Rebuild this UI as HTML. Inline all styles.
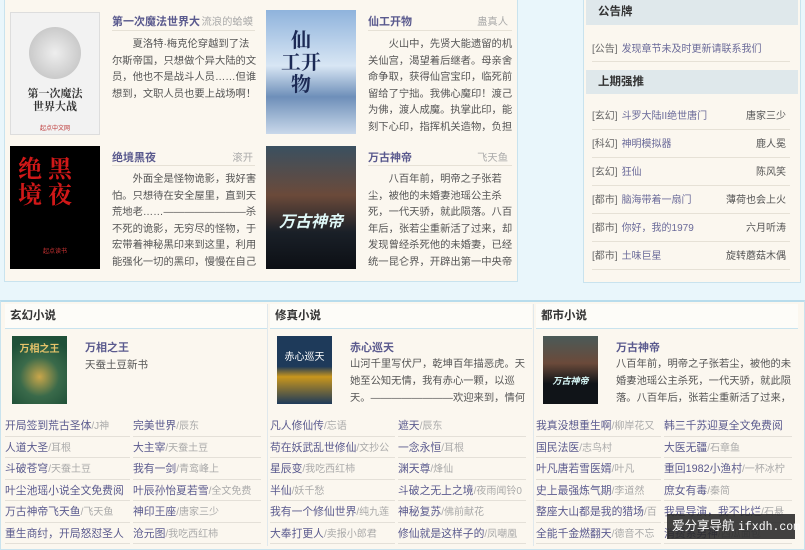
<!DOCTYPE html>
<html><head><meta charset="utf-8"><style>
*{margin:0;padding:0;box-sizing:border-box}
body{width:805px;height:546px;overflow:hidden;background:#e9f6fb;font-family:"Liberation Sans","Noto Sans CJK SC",sans-serif;font-size:11px;color:#555;position:relative}
.a{position:absolute}
.panel{background:#fbf7ef;border:1px solid #c9e3ee}
.t{color:#5a5a8e;font-weight:bold;font-size:11px;white-space:nowrap}
.au{color:#aaa;font-size:10.3px;white-space:nowrap;text-align:right}
.desc{font-size:10.3px;line-height:16.6px;color:#555;text-indent:2em;overflow:hidden}
.hd{background:#dfe8eb;font-weight:bold;font-size:11.5px;color:#333;padding-left:12px;line-height:26px}
.row{border-bottom:1px solid #e6e1d6;font-size:10px;height:28px;line-height:30px;white-space:nowrap;position:relative}
.row .k{color:#666}.row .n{color:#6a6a99;margin-left:4px}
.row .r{position:absolute;right:4px;top:0;color:#555}
.ch{font-weight:bold;font-size:11.5px;color:#333;border-bottom:1px solid #c9e3ee;background:#fdfcf8;line-height:24px;padding-left:5px}
.li{height:21.5px;line-height:22px;border-bottom:1px solid #e4e0d8;font-size:10.8px;white-space:nowrap;overflow:hidden;color:#5a5a8e}
.li i{font-style:normal;color:#aaa;font-size:10px}
.cover{overflow:hidden;text-align:center}
</style></head><body>

<div class="a panel" style="left:4px;top:-2px;width:514px;height:284px"></div>

<div class="a cover" style="left:10px;top:12px;width:90px;height:123px;background:#f2f2f2;border:1px solid #ddd">
 <div style="margin:14px auto 0;width:52px;height:52px;border-radius:50%;background:radial-gradient(circle,#eee,#bbb)"></div>
 <div style="font-family:'Noto Serif CJK SC',serif;font-weight:bold;font-size:11px;color:#333;line-height:13px;margin-top:8px">第一次魔法<br>世界大战</div>
 <div style="font-size:6px;color:#b33;margin-top:10px">起点中文网</div>
</div>
<div class="a t" style="left:112px;top:13px">第一次魔法世界大</div>
<div class="a au" style="left:193px;top:13px;width:60px">流浪的蛤蟆</div>
<div class="a" style="left:112px;top:30px;width:143px;border-top:1px solid #e6e1d6"></div>
<div class="a desc" style="left:112px;top:37px;width:145px;height:70px">夏洛特·梅克伦穿越到了法尔斯帝国，只想做个异大陆的文员，他也不是战斗人员……但谁想到，文职人员也要上战场啊！</div>

<div class="a cover" style="left:266px;top:10px;width:90px;height:124px;background:linear-gradient(180deg,#8fb3dc,#d8e6f4 45%,#6e8fb9 70%,#c9d8ea);">
 <div style="font-family:'Noto Serif CJK SC',serif;font-size:20px;color:#1c2a55;font-weight:bold;line-height:22px;margin-top:18px;margin-left:-20px">仙<br>工开<br>物</div>
</div>
<div class="a t" style="left:368px;top:13px">仙工开物</div>
<div class="a au" style="left:448px;top:13px;width:60px">蛊真人</div>
<div class="a" style="left:368px;top:30px;width:144px;border-top:1px solid #e6e1d6"></div>
<div class="a desc" style="left:368px;top:37px;width:146px;height:98px">火山中，先贤大能遗留的机关仙宫，渴望着后继者。母亲舍命争取，获得仙宫宝印，临死前留给了宁拙。我佛心魔印！渡己为佛，渡人成魔。执掌此印，能刻下心印，指挥机关造物，负担极低。常人指</div>

<div class="a cover" style="left:10px;top:146px;width:90px;height:123px;background:#000">
 <div style="font-family:'Noto Serif CJK SC',serif;font-size:24px;color:#d01818;font-weight:bold;line-height:26px;margin-top:8px;text-align:left;padding-left:8px">绝 黑<br>境 夜</div>
 <div style="font-size:6px;color:#c33;margin-top:40px">起点读书</div>
</div>
<div class="a t" style="left:112px;top:149px">绝境黑夜</div>
<div class="a au" style="left:193px;top:149px;width:60px">滚开</div>
<div class="a" style="left:112px;top:165px;width:143px;border-top:1px solid #e6e1d6"></div>
<div class="a desc" style="left:112px;top:172px;width:145px;height:100px">外面全是怪物诡影，我好害怕。只想待在安全屋里，直到天荒地老……————————杀不死的诡影，无穷尽的怪物，于宏带着神秘黑印来到这里，利用能强化一切的黑印，慢慢在自己的安全屋</div>

<div class="a cover" style="left:266px;top:146px;width:90px;height:123px;background:linear-gradient(180deg,#3a5060,#6b4a3a 40%,#1a2028 70%,#0c0f14)">
 <div style="font-size:16px;font-weight:bold;color:#dff8f8;margin-top:62px;font-style:italic">万古神帝</div>
</div>
<div class="a t" style="left:368px;top:149px">万古神帝</div>
<div class="a au" style="left:448px;top:149px;width:60px">飞天鱼</div>
<div class="a" style="left:368px;top:165px;width:144px;border-top:1px solid #e6e1d6"></div>
<div class="a desc" style="left:368px;top:172px;width:146px;height:100px">八百年前，明帝之子张若尘，被他的未婚妻池瑶公主杀死，一代天骄，就此陨落。八百年后，张若尘重新活了过来，却发现曾经杀死他的未婚妻，已经统一昆仑界，开辟出第一中央帝国，号称“池瑶女</div>

<div class="a panel" style="left:583px;top:-2px;width:218px;height:285px">
 <div class="hd" style="margin:0 2px">公告牌</div>
 <div style="padding:0 10px 0 8px">
  <div class="row" style="margin-top:10px;height:27px"><span class="k">[公告]</span><span class="n">发现章节未及时更新请联系我们</span></div>
 </div>
 <div class="hd" style="margin:8px 2px 0;line-height:24px">上期强推</div>
 <div style="padding:8px 10px 0 8px">
  <div class="row"><span class="k">[玄幻]</span><span class="n">斗罗大陆II绝世唐门</span><span class="r">唐家三少</span></div>
  <div class="row"><span class="k">[科幻]</span><span class="n">神明模拟器</span><span class="r">鹿人冕</span></div>
  <div class="row"><span class="k">[玄幻]</span><span class="n">狂仙</span><span class="r">陈风笑</span></div>
  <div class="row"><span class="k">[都市]</span><span class="n">脑海带着一扇门</span><span class="r">薄荷也会上火</span></div>
  <div class="row"><span class="k">[都市]</span><span class="n">你好，我的1979</span><span class="r">六月听涛</span></div>
  <div class="row"><span class="k">[都市]</span><span class="n">土味巨星</span><span class="r">旋转蘑菇木偶</span></div>
 </div>
</div>

<div class="a panel" style="left:0;top:300px;width:805px;height:250px;border-top:2px solid #b8dcec"></div>

<div class="a" style="left:5px;top:304px;width:262px"><div class="ch">玄幻小说</div></div>
<div class="a cover" style="left:12px;top:336px;width:55px;height:68px;background:radial-gradient(circle at 50% 60%,#c9a64a 0,#3a6a4a 40%,#1f5038 80%)"><div style="color:#e6c36a;font-size:10px;font-weight:bold;margin-top:4px">万相之王</div></div>
<div class="a t" style="left:85px;top:339px">万相之王</div>
<div class="a" style="left:85px;top:357px;font-size:10.5px;color:#555">天蚕土豆新书</div>
<div class="a" style="left:5px;top:415px;width:125px">
 <div class="li">开局签到荒古圣体<i>/J神</i></div><div class="li">人道大圣<i>/耳根</i></div><div class="li">斗破苍穹<i>/天蚕土豆</i></div><div class="li">叶尘池瑶小说全文免费阅</div><div class="li">万古神帝飞天鱼<i>/飞天鱼</i></div><div class="li">重生商纣，开局怒怼圣人</div>
</div>
<div class="a" style="left:133px;top:415px;width:128px">
 <div class="li">完美世界<i>/辰东</i></div><div class="li">大主宰<i>/天蚕土豆</i></div><div class="li">我有一剑<i>/青鸾峰上</i></div><div class="li">叶辰孙怡夏若雪<i>/全文免费</i></div><div class="li">神印王座<i>/唐家三少</i></div><div class="li">沧元图<i>/我吃西红柿</i></div>
</div>

<div class="a" style="left:267px;top:304px;height:242px;border-left:1px solid #e0e8ec"></div>
<div class="a" style="left:270px;top:304px;width:262px"><div class="ch">修真小说</div></div>
<div class="a cover" style="left:277px;top:336px;width:55px;height:68px;background:linear-gradient(180deg,#1e3a5a 45%,#c9961c 60%,#1e3a5a)"><div style="color:#fff;font-size:10px;margin-top:12px">赤心巡天</div></div>
<div class="a t" style="left:350px;top:339px">赤心巡天</div>
<div class="a" style="left:350px;top:356px;width:180px;font-size:10.3px;line-height:17px;color:#555;height:51px;overflow:hidden">山河千里写伏尸，乾坤百年描恶虎。天她至公知无情，我有赤心一颗，以巡天。————————欢迎来到，情何以甚</div>
<div class="a" style="left:270px;top:415px;width:125px">
 <div class="li">凡人修仙传<i>/忘语</i></div><div class="li">苟在妖武乱世修仙<i>/文抄公</i></div><div class="li">星辰变<i>/我吃西红柿</i></div><div class="li">半仙<i>/妖千愁</i></div><div class="li">我有一个修仙世界<i>/纯九莲</i></div><div class="li">大奉打更人<i>/卖报小郎君</i></div>
</div>
<div class="a" style="left:398px;top:415px;width:128px">
 <div class="li">遮天<i>/辰东</i></div><div class="li">一念永恒<i>/耳根</i></div><div class="li">渊天尊<i>/烽仙</i></div><div class="li">斗破之无上之境<i>/夜雨闻铃0</i></div><div class="li">神秘复苏<i>/佛前献花</i></div><div class="li">修仙就是这样子的<i>/凤嘲凰</i></div>
</div>

<div class="a" style="left:533px;top:304px;height:242px;border-left:1px solid #e0e8ec"></div>
<div class="a" style="left:536px;top:304px;width:262px"><div class="ch">都市小说</div></div>
<div class="a cover" style="left:543px;top:336px;width:55px;height:68px;background:linear-gradient(180deg,#4a5a58,#6b4a3a 40%,#101418 70%)"><div style="color:#dff;font-size:9px;font-weight:bold;margin-top:38px;font-style:italic">万古神帝</div></div>
<div class="a t" style="left:616px;top:339px">万古神帝</div>
<div class="a" style="left:616px;top:356px;width:180px;font-size:10.3px;line-height:17px;color:#555;height:51px;overflow:hidden">八百年前，明帝之子张若尘，被他的未婚妻池瑶公主杀死，一代天骄，就此陨落。八百年后，张若尘重新活了过来，却发现</div>
<div class="a" style="left:536px;top:415px;width:125px">
 <div class="li">我真没想重生啊<i>/柳岸花又</i></div><div class="li">国民法医<i>/志鸟村</i></div><div class="li">叶凡唐若雪医婿<i>/叶凡</i></div><div class="li">史上最强炼气期<i>/李道然</i></div><div class="li">整座大山都是我的猎场<i>/百</i></div><div class="li">全能千金燃翻天<i>/德音不忘</i></div>
</div>
<div class="a" style="left:664px;top:415px;width:128px">
 <div class="li">韩三千苏迎夏全文免费阅</div><div class="li">大医无疆<i>/石章鱼</i></div><div class="li">重回1982小渔村<i>/一杯冰柠</i></div><div class="li">庶女有毒<i>/秦简</i></div><div class="li">我是导演，我不比烂<i>/石悬</i></div><div class="li">消费系男神<i>/西瓜面包</i></div>
</div>

<div class="a" style="left:667px;top:514px;width:128px;height:25px;background:rgba(40,40,40,.88);color:#fff;font-size:12.5px;line-height:25px;padding-left:5px;white-space:nowrap">爱分享导航 <span style="font-family:'Liberation Mono',monospace;font-size:11.5px">ifxdh.com</span></div>
</body></html>
